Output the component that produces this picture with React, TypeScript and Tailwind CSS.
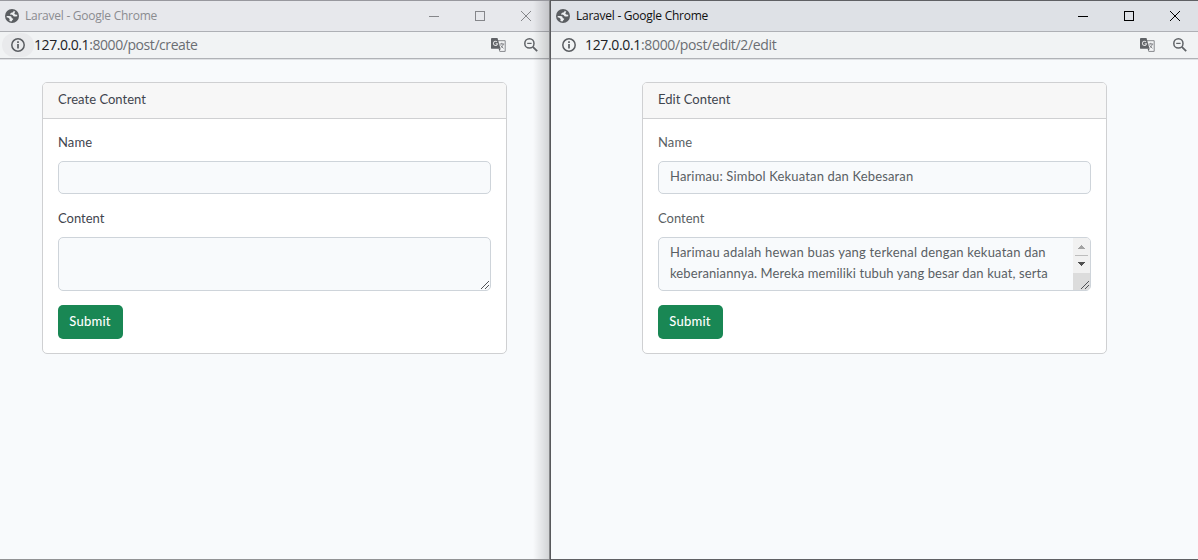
import React from 'react';

const nunito = "font-['Lato','Open_Sans',sans-serif]";
const segoe = "font-['Open_Sans','Noto_Sans',sans-serif]";

function Globe() {
  return (
    <svg width="14" height="14" viewBox="0 0 14 14" className="shrink-0">
      <circle cx="7" cy="7" r="7" fill="#5a5d61" />
      <path
        d="M8.6 1.7 C8.4 3.2 7.8 3.3 6.6 3.5 C6.2 4.3 5 4.4 5 5.4 C6.4 5.6 7.8 5.6 8.2 6.8 C8.8 8 10 7.6 12.3 7.2 C12.3 6.6 12.2 6.1 12 5.5 C10.6 6 9.7 5.4 9.4 4.6 C9.3 3.8 9.9 3.4 10.3 2.7 C9.8 2.2 9.2 1.9 8.6 1.7 Z"
        fill="#eceef0"
      />
      <path
        d="M1.6 7 C3.2 7 5.6 6.8 6.4 7.7 C6.7 8.3 6.4 8.9 7 9.2 C8.2 9.4 8.6 9.9 8 10.5 C7.2 10.9 7.3 11.8 6.4 12.4 C5.6 12.4 4.8 12.1 4.2 11.8 C5 11 4.6 10.4 4.4 9.8 C3.8 8.8 3 8.7 1.8 8.5 Z"
        fill="#eceef0"
      />
    </svg>
  );
}

function InfoIcon() {
  return (
    <svg width="14" height="14" viewBox="0 0 14 14" className="shrink-0">
      <circle cx="7" cy="7" r="6.2" fill="none" stroke="#5a5d61" strokeWidth="1.5" />
      <path d="M7 3.3v1.7M7 6v4.6" stroke="#5a5d61" strokeWidth="1.7" />
    </svg>
  );
}

function ZoomOutIcon() {
  return (
    <svg width="14" height="14" viewBox="0 0 14 14" className="shrink-0">
      <circle cx="5.4" cy="5.4" r="4.6" fill="none" stroke="#606367" strokeWidth="1.5" />
      <path d="M8.8 8.8l4.4 4.4" stroke="#606367" strokeWidth="1.8" />
      <path d="M3.2 5.4h4.4" stroke="#606367" strokeWidth="1.2" />
    </svg>
  );
}

function TranslateIcon() {
  return (
    <svg width="15" height="14" viewBox="0 0 15 14" className="shrink-0">
      <path d="M6.5 2.7h7.7v10.7h-5.6" fill="#f4f5f6" stroke="#86888c" />
      <path d="M0.9 0h5.6l3 10.8H0.9A.9.9 0 0 1 0 9.9V.9A.9.9 0 0 1 .9 0z" fill="#606367" />
      <path d="M7.6 10.8h2l-1 2.7z" fill="#606367" />
      <path d="M6 3.9a2.1 2.1 0 1 0 .6 1.8H4.6" fill="none" stroke="#dcddde" strokeWidth="1.1" />
      <path d="M8.6 6h4.6M10.8 4.8V6M12.3 6c-.3 1.7-1.4 3-2.6 3.8M9.7 7.3c.6 1.2 1.6 2.2 2.8 3" fill="none" stroke="#77797d" strokeWidth=".9" />
    </svg>
  );
}

function WindowButtons({ color }: { color: string }) {
  return (
    <svg width="104" height="12" viewBox="0 0 104 12" fill="none" stroke={color} shapeRendering="crispEdges" className="shrink-0">
      <path d="M0 6.5h10" />
      <rect x="46.5" y="1.5" width="9" height="9" />
      <path d="M92 1l10 10M102 1l-10 10" shapeRendering="auto" />
    </svg>
  );
}

function Grip() {
  return (
    <svg width="9" height="9" viewBox="0 0 9 9" shapeRendering="crispEdges" className="absolute right-0 bottom-0">
      {[0, 1, 2, 3, 4, 5, 6, 7].map((i) => (
        <rect key={i} x={i} y={7 - i} width="1" height="1" fill="#505256" />
      ))}
      {[0, 1, 2, 3].map((i) => (
        <rect key={i} x={4 + i} y={7 - i} width="1" height="1" fill="#505256" />
      ))}
    </svg>
  );
}

function ScrollBar() {
  return (
    <div className="flex w-[17px] shrink-0 flex-col items-center bg-[#f1f1f1]">
      <svg width="17" height="35" viewBox="0 0 17 35" shapeRendering="crispEdges">
        <path d="M5 11h7v-1h-1v-1h-1v-1h-1v-1h-1v1h-1v1h-1v1h-1z" fill="#a3a3a3" />
        <path d="M2 17.5h13" stroke="#bdbdbd" />
        <path d="M5 24h7v1h-1v1h-1v1h-1v1h-1v-1h-1v-1h-1v-1h-1z" fill="#505050" />
      </svg>
      <div className="w-full grow bg-[#dcdcdc]" />
    </div>
  );
}

interface Line {
  text: string;
  tracking: string;
}

interface WindowProps {
  active: boolean;
  path: string;
  pathClass: string;
  title: string;
  name: string;
  lines: Line[];
}

function BrowserWindow({ active, path, pathClass, title, name, lines }: WindowProps) {
  const textColor = active ? 'text-[#5a5f64]' : 'text-[#3f454e]';
  return (
    <section className={`relative flex h-[560px] flex-col overflow-hidden border-y bg-[#f8fafc] ${active ? 'w-[647px] border-t-[#5f6064] border-b-[#606164]' : 'w-[549px] border-t-[#98989e] border-b-[#929395]'}`}>
      <header className={`flex h-[31px] shrink-0 items-center justify-between border-b border-[#aeb0b5] pr-[16px] pl-[5px] ${active ? 'bg-[#dee1e6]' : 'bg-[#e7e8ec]'}`}>
        <div className="flex items-center gap-1.5">
          <Globe />
          <span className={`text-[12px] leading-4 tracking-[-0.25px] whitespace-nowrap ${segoe} ${active ? 'text-[#101010]' : 'text-[#8b8c90]'}`}>Laravel - Google Chrome</span>
        </div>
        <WindowButtons color={active ? '#000000' : '#85868a'} />
      </header>
      <div className="h-[28px] shrink-0 border-b border-[#dfe1e4]">
        <div className={`flex h-[27px] items-center justify-between border-b border-[#b0b2b6] bg-[#f1f3f4] pr-[11px] ${active ? 'pl-[4px]' : 'pl-[2px]'}`}>
          <div className="flex items-center">
            <div className={`flex h-6 w-8 items-center justify-center rounded-xl ${active ? '-ml-[2px]' : 'bg-[#e9eaec]'}`}>
              <InfoIcon />
            </div>
            <span className={`text-[14px] leading-5 whitespace-nowrap text-[#6b6e73] ${segoe} ${pathClass}`}>
              <span className="text-[#202124]">127.0.0.1</span>
              {path}
            </span>
          </div>
          <div className="flex items-center gap-[18px]">
            <TranslateIcon />
            <ZoomOutIcon />
          </div>
        </div>
      </div>
      <main className={`grow pt-[22px] ${nunito} ${textColor} ${active ? 'pl-[91px]' : 'pl-[42px]'}`}>
        <div className="h-[272px] w-[465px] rounded-[5px] border border-[#cfd0d2] bg-white text-[13px]">
          <div className="flex h-9 items-center rounded-t border-b border-[#cfd0d2] bg-[#f7f7f7] pb-px pl-[15px] tracking-[0.03px] text-[#3f454e]">
            {title}
          </div>
          <form className="flex flex-col items-start px-[15px] pt-[13px]">
            <label className="mb-[9px] h-[20px] leading-[20px] tracking-[0.1px]">Name</label>
            <div className="flex h-[33px] w-[433px] items-center rounded-[5px] border border-[#ced4da] bg-[#f8fafc] pb-px pl-[11px] tracking-[0.15px]">{name}</div>
            <label className="mt-[14px] mb-[9px] h-[20px] leading-[20px]">Content</label>
            <div className="relative flex h-[54px] w-[433px] justify-between overflow-hidden rounded-[5px] border border-[#ced4da] bg-[#f8fafc] pl-[11px]">
              <div className="pt-[4px] leading-[21px] whitespace-nowrap">
                {lines.map((line) => (
                  <div key={line.text} className={line.tracking}>{line.text}</div>
                ))}
              </div>
              {active && <ScrollBar />}
              <Grip />
            </div>
            <button type="button" className="mt-[14px] h-[34px] w-[65px] rounded-[5px] bg-[#198754] pr-px font-medium tracking-[0.2px] text-white">Submit</button>
          </form>
        </div>
      </main>
      {!active && <div className="absolute inset-y-0 right-0 w-4 bg-linear-to-r from-transparent to-black/15" />}
    </section>
  );
}

export default function App() {
  return (
    <div className="flex h-[560px] w-[1198px] overflow-hidden">
      <BrowserWindow active={false} path=":8000/post/create" pathClass="tracking-[-0.43px]" title="Create Content" name="" lines={[]} />
      <div className="h-[560px] w-[2px] border-r border-[#58595c] bg-[#858688]" />
      <BrowserWindow
        active
        path=":8000/post/edit/2/edit"
        pathClass="tracking-[-0.34px]"
        title="Edit Content"
        name="Harimau: Simbol Kekuatan dan Kebesaran"
        lines={[
          { text: 'Harimau adalah hewan buas yang terkenal dengan kekuatan dan', tracking: 'tracking-[0.2px]' },
          { text: 'keberaniannya. Mereka memiliki tubuh yang besar dan kuat, serta', tracking: 'tracking-[0.11px]' },
        ]}
      />
    </div>
  );
}
